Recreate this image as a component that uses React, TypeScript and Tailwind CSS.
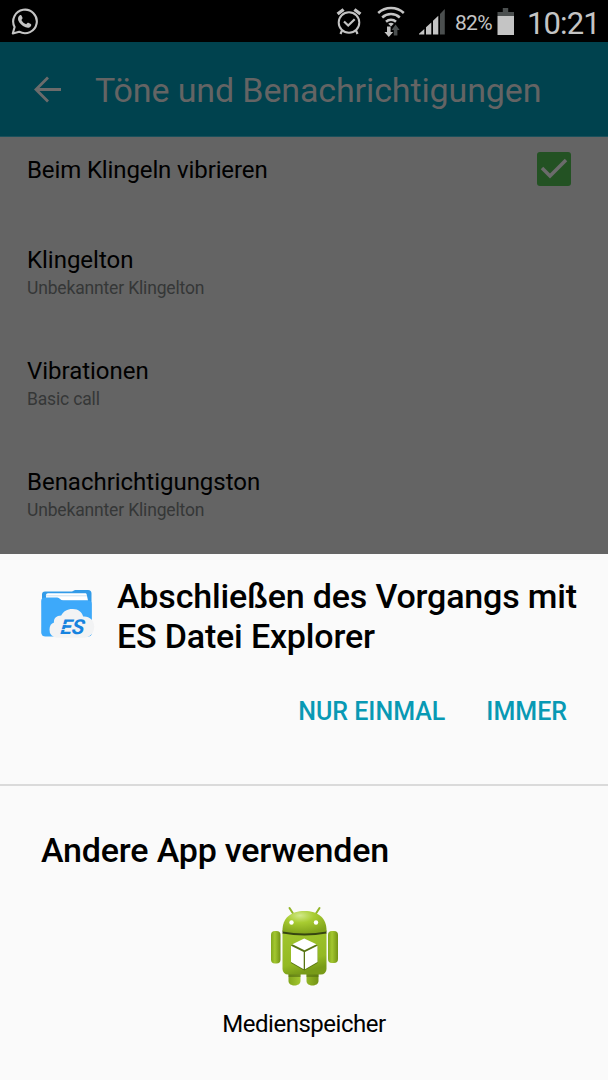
const settings = [
  { title: 'Klingelton', value: 'Unbekannter Klingelton' },
  { title: 'Vibrationen', value: 'Basic call' },
  { title: 'Benachrichtigungston', value: 'Unbekannter Klingelton' },
]

function WhatsAppIcon() {
  return (
    <svg className="h-[27px] w-[27px]" viewBox="0 0 27 27" fill="none">
      <path
        d="M1.800 25.500 3.600 19A11.800 11.800 0 1 1 8.200 23.700Z"
        stroke="#c4c4c4"
        strokeWidth="2.1"
        strokeLinejoin="round"
      />
      <path
        d="M8.800 7.200c.6-.5 1.400-.4 1.700.3l1 2.300c.2.6-.1 1-1.100 2.100 1.200 2.200 2.700 3.400 4.800 4.400 1.400-1.700 1.600-1.800 2.200-1.600l2.400 1.200c.8.4.4 1.800-.2 2.600-1.100 1.400-3.100 1.500-5 .7-3.800-1.400-6.200-4.200-7.300-6.800-.7-1.900-.1-4.200 1.500-5.200Z"
        fill="#c4c4c4"
      />
    </svg>
  )
}

function AlarmIcon() {
  return (
    <svg className="h-[28px] w-[26px]" viewBox="0 0 26 28" fill="none" stroke="#c4c4c4">
      <circle cx="13" cy="15.500" r="10.300" strokeWidth="2" />
      <path d="m8 14.500 4.200 4 6.500-6.300" strokeWidth="2.2" />
      <path d="m1.600 7 6-4.500M24.400 7l-6-4.500" strokeWidth="3.4" />
      <path d="m6 23.500-1.500 3.500M20 23.500l1.500 3.500" strokeWidth="2.2" />
    </svg>
  )
}

function WifiIcon() {
  return (
    <svg className="h-[31px] w-[28px]" viewBox="0 0 28 31" fill="none">
      <path d="M1.200 7a19 19 0 0 1 25.600 0M5.200 11.500a13 13 0 0 1 17.600 0M9 15.700a7.500 7.500 0 0 1 10 0" stroke="#c4c4c4" strokeWidth="2.5" />
      <path d="M11.200 17.800a4.500 4.500 0 0 1 5.600 0L14 20.500Z" fill="#c4c4c4" />
      <path d="M10 20.500h3.600v5.500h2.600L11.800 31l-4.400-5H10Z" fill="#c4c4c4" />
      <path d="M16.800 29.500h3.600V24h2.200l-4-5.500-4 5.500h2.200Z" fill="#4b4f4f" />
    </svg>
  )
}

function SignalIcon() {
  return (
    <svg className="h-[28px] w-[28px]" viewBox="0 0 28 28">
      <path d="M1 27.500v-.8l5.300-4.700v5.500ZM8 27.500v-7.200l5.300-4.800v12ZM15 27.500V13.700l5.300-4.900v18.700Z" fill="#c4c4c4" />
      <path d="M22 27.500V6.900l4.800-5v25.600Z" fill="#4b4f4f" />
    </svg>
  )
}

function BatteryIcon() {
  return (
    <svg className="h-[27px] w-[18px]" viewBox="0 0 18 27">
      <path d="M.5 4h5.300V0h5.400v4h5.800v4H.5Z" fill="#4b4f4f" />
      <path d="M.5 8H17v19H.5Z" fill="#c4c4c4" />
    </svg>
  )
}

function ExplorerIcon() {
  return (
    <svg className="h-[48px] w-[54px] overflow-visible" viewBox="0 0 54 48">
      <path d="M1 8V4.500a3 3 0 0 1 3-3h27l3-1.500h13a3.500 3.500 0 0 1 3.500 3.500V43a3 3 0 0 1-3 3H4a3.500 3.500 0 0 1-3.500-3.500Z" fill="#329be8" />
      <path d="M5 5.200c0-1.200.8-2 2-2h37c1 0 1.500.5 1.700 1.300L47 10.500H5Z" fill="#fff" />
      <path d="M5 5.800h41" stroke="#b5d5ec" strokeWidth=".7" />
      <path d="M.2 11a3.500 3.500 0 0 1 3.500-3.500h12.500c2.500 0 3.300 3 6 3h25a3.500 3.500 0 0 1 3.500 3.500V43a3.500 3.500 0 0 1-3.500 3.500H4.500A4 4 0 0 1 .5 42.500Z" fill="#3da9fa" />
      <path d="M16 47.700a7.600 7.600 0 0 1-7.500-8.200c0-3.800 1.800-6.200 4.500-7-.5-4 2.400-7 7.200-7C22.500 21 26.500 18.800 32 19c5.500 0 9 3.200 10.200 7.500 6-.6 11 3.800 11 10 0 6.500-4 11.200-10.500 11.200Z" fill="#f2f3f4" />
      <text
        x="18"
        y="44"
        transform="translate(12.500 0) skewX(-16)"
        textLength="24"
        lengthAdjust="spacingAndGlyphs"
        fontFamily="Roboto, sans-serif"
        fontSize="20.500"
        fontWeight="700"
        fill="#1683df"
      >
        ES
      </text>
      <path d="M20 34.500h12M18.500 39.500h8" stroke="#f2f3f4" strokeWidth=".8" />
    </svg>
  )
}

function AndroidIcon() {
  return (
    <svg className="ml-[2px] h-[80px] w-[70px]" viewBox="0 0 70 80">
      <defs>
        <linearGradient id="body" x1="0" y1="0" x2=".3" y2="1">
          <stop offset="0" stopColor="#a0c52d" />
          <stop offset=".75" stopColor="#94b923" />
          <stop offset="1" stopColor="#789b18" />
        </linearGradient>
        <linearGradient id="limb">
          <stop offset="0" stopColor="#82a61c" />
          <stop offset=".4" stopColor="#a3c730" />
          <stop offset="1" stopColor="#739314" />
        </linearGradient>
        <radialGradient id="head" cx=".4" cy=".2" r=".8">
          <stop offset="0" stopColor="#d1e98a" />
          <stop offset=".4" stopColor="#a8cc31" />
          <stop offset="1" stopColor="#81a31b" />
        </radialGradient>
      </defs>
      <path d="m19.500 2 4.500 7M49.500 2 45 9" stroke="#91b426" strokeWidth="2" strokeLinecap="round" />
      <rect x="1" y="25" width="9.500" height="32.500" rx="4" fill="url(#limb)" />
      <rect x="58" y="25" width="10" height="32" rx="4" fill="url(#limb)" />
      <path d="M18.500 62h12v13c0 6-12 6-12 0ZM36.500 62h12v13c0 6-12 6-12 0Z" fill="url(#limb)" />
      <path d="M18.500 66h12v5h-12zM36.500 66h12v5h-12z" fill="#526c0f" opacity=".6" />
      <path d="M12.500 27h44v36a5.500 5.500 0 0 1-5.500 5.500H18a5.500 5.500 0 0 1-5.500-5.500Z" fill="url(#body)" />
      <path d="M12.500 24.500h44v3q-22 4-44 0Z" fill="#364511" />
      <path d="M12.500 25.500C12 12 21 5 34.500 5S57 12 56.500 25.500q-22 4-44 0Z" fill="url(#head)" />
      <circle cx="21.500" cy="16.500" r="2.200" fill="#fff" />
      <circle cx="46" cy="16.500" r="2.200" fill="#fff" />
      <path d="m34.300 33.500 13.200 6v17.500l-13.200 7.500L21 57V39.500Z" fill="#587512" />
      <path d="m34.200 32.500 12.300 5.800-12 5.900-12.100-5.900ZM21 39.700l12.700 6.200v17.300L21 56ZM47.500 39.700l-12.500 6.200v17.300L47.500 56Z" fill="#fff" />
    </svg>
  )
}

export default function App() {
  return (
    <div className="flex h-[1080px] w-[608px] flex-col overflow-hidden bg-[#646464] font-['Roboto',sans-serif] whitespace-nowrap">

      {/* Status bar */}
      <div className="flex h-[42px] shrink-0 items-center bg-black pl-[11px] text-[#c4c4c4]">
        <WhatsAppIcon />
        <div className="ml-[298px] flex items-center">
          <AlarmIcon />
          <div className="ml-[15px]"><WifiIcon /></div>
          <div className="ml-[13px]"><SignalIcon /></div>
          <span className="ml-[9px] w-[37px] pt-[5px] text-[21px] tracking-[-0.7px]">82%</span>
          <div className="ml-[5px]"><BatteryIcon /></div>
          <span className="ml-[12px] pt-[5px] text-[31px] leading-[38px] tracking-[-0.9px]">10:21</span>
        </div>
      </div>

      {/* Header */}
      <div className="flex h-[95px] shrink-0 items-center border-b border-[#1b505b] bg-[#00424e] pl-[33px] text-[#646464]">
        <svg className="h-[28px] w-[28px]" viewBox="0 0 28 28" fill="none" stroke="#6b6b6b" strokeWidth="2.8">
          <path d="M28 14.500H3M15 2.500 3 14.500l12 12" />
        </svg>
        <h1 className="ml-[34px] pt-[3px] text-[34px] tracking-[-0.12px]">Töne und Benachrichtigungen</h1>
      </div>

      {/* Settings */}
      <div className="h-[417px] shrink-0 px-[27px] text-black">
        <div className="mb-[14px] flex h-[66px] items-center justify-between pr-[10px]">
          <span className="text-[24px] tracking-[-0.12px]">Beim Klingeln vibrieren</span>
          <span className="mb-[2px] flex h-[34px] w-[34px] items-center justify-center rounded-[3px] bg-[#235223]">
            <svg className="h-[34px] w-[34px]" viewBox="0 0 34 34" fill="none" stroke="#6b6b6b" strokeWidth="3.5">
              <path d="m5 16 8 8L29 8" />
            </svg>
          </span>
        </div>
        {settings.map(item => (
          <div key={item.title} className="flex h-[111.3px] flex-col justify-center">
            <span className="text-[24px] leading-[30px] tracking-[-0.02px]">{item.title}</span>
            <span className="text-[17.5px] leading-[26px] tracking-[-0.16px] text-[#353737]">{item.value}</span>
          </div>
        ))}
      </div>

      {/* App chooser */}
      <div className="flex grow flex-col bg-[#fafafa] text-black">
        <div className="flex h-[102px] pt-[22px] pl-[41px]">
          <div className="mt-[14px]"><ExplorerIcon /></div>
          <h2 className="ml-[22px] text-[34px] leading-[40px] font-medium tracking-[-0.17px]">
            Abschließen des Vorgangs mit<br />ES Datei Explorer
          </h2>
        </div>
        <div className="flex h-[128px] justify-end gap-[41px] pt-[39px] pr-[41px] text-[25px] leading-[34px] font-medium text-[#0899b4]">
          <button className="self-start">NUR EINMAL</button>
          <button className="self-start">IMMER</button>
        </div>
        <div className="h-[2px] bg-[#dadada]" />
        <h2 className="mt-[44px] ml-[41px] text-[34px] leading-[40px] font-medium tracking-[-0.18px]">Andere App verwenden</h2>
        <div className="mt-[36px] flex flex-col items-center">
          <AndroidIcon />
          <span className="mt-[23px] text-[24px] leading-[30px] tracking-[-0.48px]">Medienspeicher</span>
        </div>
      </div>
    </div>
  )
}
